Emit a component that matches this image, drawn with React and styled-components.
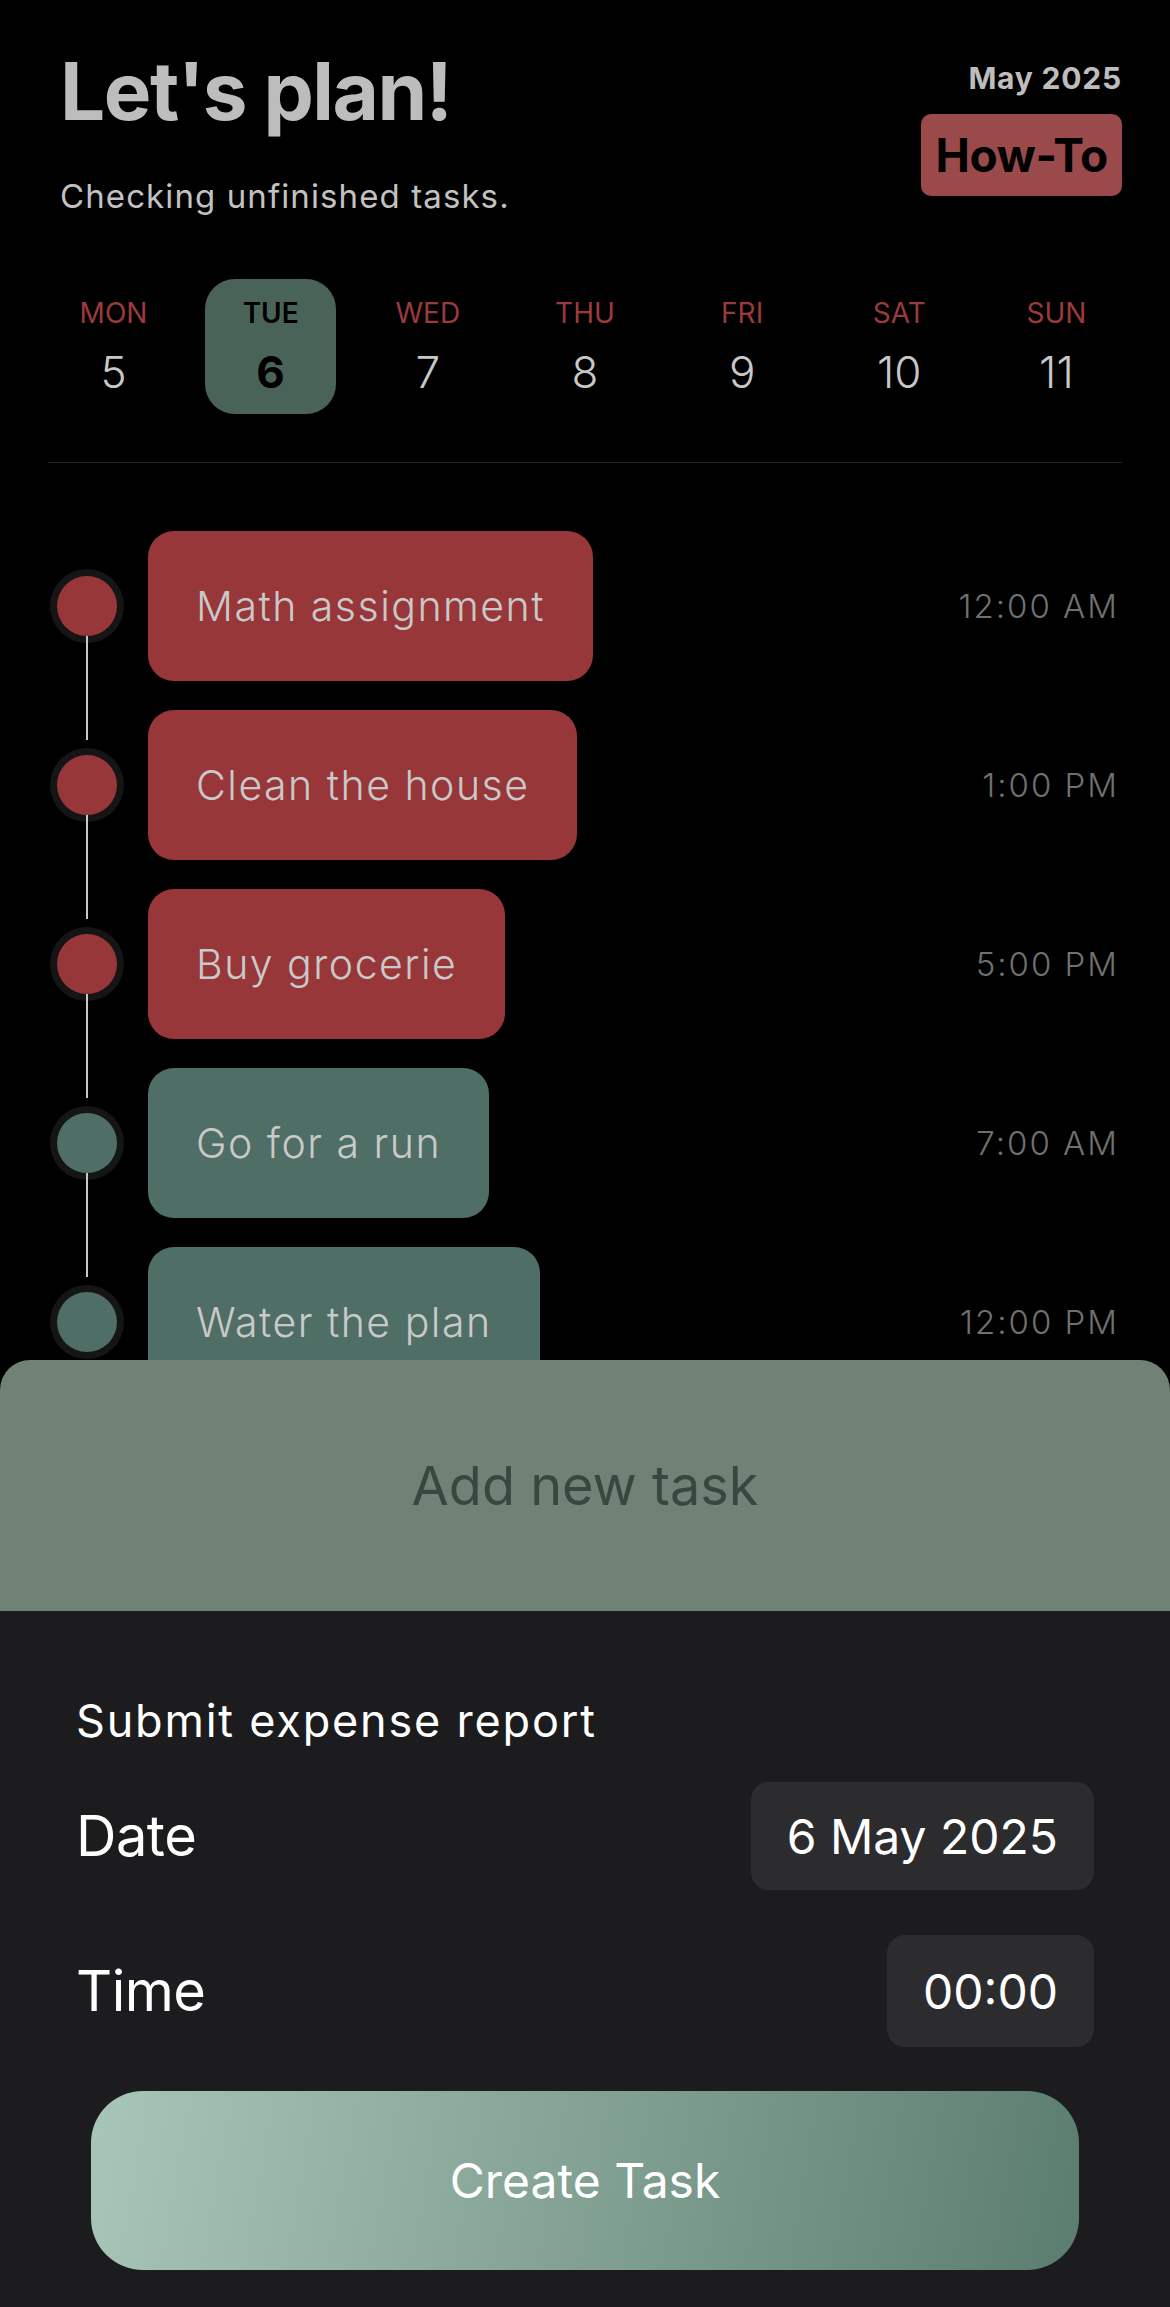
import styled, { createGlobalStyle } from 'styled-components';

const GlobalStyle = createGlobalStyle`
  html, body {
    margin: 0;
    padding: 0;
    background: #000;
  }
  body {
    font-family: Inter, "Noto Sans", "Liberation Sans", sans-serif;
  }
  * {
    box-sizing: border-box;
  }
`;

const Screen = styled.div`
  width: 1170px;
  height: 2307px;
  display: flex;
  flex-direction: column;
  background: #000;
  overflow: hidden;
`;

const Header = styled.header`
  display: flex;
  justify-content: space-between;
  padding: 51px 48px 0 60px;
`;

const TitleBox = styled.div`
  display: flex;
  flex-direction: column;
`;

const Title = styled.h1`
  margin: 0;
  font-size: 80px;
  line-height: 80px;
  font-weight: 700;
  letter-spacing: -1.5px;
  color: #bdbdbd;
`;

const Subtitle = styled.p`
  margin: 45px 0 0;
  font-size: 33px;
  line-height: 40px;
  font-weight: 400;
  color: #c2c2c2;
  letter-spacing: 1.1px;
`;

const Side = styled.div`
  display: flex;
  flex-direction: column;
  align-items: flex-end;
`;

const Month = styled.div`
  margin-top: 10px;
  font-size: 30px;
  line-height: 34px;
  font-weight: 700;
  color: #bdbdbd;
  letter-spacing: 0.8px;
`;

const HowTo = styled.button`
  margin-top: 19px;
  height: 82px;
  padding: 0 14px;
  border: none;
  border-radius: 10px;
  background: #9b4a4c;
  color: #000;
  font-family: inherit;
  font-size: 46px;
  font-weight: 700;
  letter-spacing: -0.3px;
`;

const Week = styled.div`
  display: flex;
  justify-content: space-between;
  margin: 63px 48px 0;
`;

const Day = styled.div`
  width: 131px;
  height: 135px;
  border-radius: 30px;
  display: flex;
  flex-direction: column;
  align-items: center;
  padding-top: 17px;
  background: ${(p) => (p.$active ? '#4a6358' : 'transparent')};
`;

const DayName = styled.span`
  font-size: 28px;
  line-height: 34px;
  font-weight: ${(p) => (p.$active ? 600 : 400)};
  color: ${(p) => (p.$active ? '#000' : '#9b3a3d')};
`;

const DayNum = styled.span`
  margin-top: 20px;
  font-size: 44px;
  line-height: 44px;
  font-weight: ${(p) => (p.$active ? 700 : 300)};
  color: ${(p) => (p.$active ? '#000' : '#c8c8c8')};
`;

const Divider = styled.hr`
  margin: 48px 48px 0;
  border: none;
  height: 1px;
  background: #242424;
`;

const Timeline = styled.div`
  flex: 1;
  overflow: hidden;
  display: flex;
  flex-direction: column;
  gap: 29px;
  padding: 68px 51px 0 48px;
`;

const Row = styled.div`
  display: flex;
  align-items: center;
  flex-shrink: 0;
`;

const Rail = styled.div`
  width: 78px;
  height: 150px;
  display: flex;
  flex-direction: column;
  align-items: center;
  padding-top: 45px;
`;

const Dot = styled.div`
  width: 60px;
  height: 60px;
  flex-shrink: 0;
  border-radius: 50%;
  background: ${(p) => p.$color};
  box-shadow: 0 0 0 7px #151515;
`;

const Line = styled.div`
  width: 2px;
  height: 104px;
  flex-shrink: 0;
  background: #c8c8c8;
`;

const Card = styled.div`
  margin-left: 22px;
  height: 150px;
  padding: 0 48px;
  border-radius: 26px;
  display: flex;
  align-items: center;
  background: ${(p) => p.$color};
  color: #c9c9c9;
  font-size: 41px;
  font-weight: 300;
  letter-spacing: 1.5px;
`;

const Time = styled.span`
  margin-left: auto;
  font-size: 33px;
  font-weight: 300;
  color: #707070;
  letter-spacing: 2px;
`;

const Sheet = styled.section`
  flex-shrink: 0;
  display: flex;
  flex-direction: column;
`;

const SheetHead = styled.div`
  height: 251px;
  border-radius: 30px 30px 0 0;
  background: #708276;
  display: flex;
  align-items: center;
  justify-content: center;
  font-size: 54px;
  font-weight: 400;
  color: #374840;
  letter-spacing: 0;
`;

const SheetBody = styled.div`
  height: 696px;
  background: #1c1c1e;
  padding: 83px 76px 0;
  display: flex;
  flex-direction: column;
`;

const TaskName = styled.div`
  font-size: 45px;
  line-height: 53px;
  color: #fff;
  letter-spacing: 1.8px;
`;

const Field = styled.div`
  display: flex;
  align-items: center;
  justify-content: space-between;
  margin-top: ${(p) => p.$gap}px;
`;

const Label = styled.span`
  font-size: 56px;
  color: #fff;
  letter-spacing: -0.5px;
`;

const Pill = styled.div`
  height: ${(p) => p.$h}px;
  padding: 0 36px;
  border-radius: 18px;
  background: #2c2c2f;
  display: flex;
  align-items: center;
  font-size: 48px;
  color: #fff;
  letter-spacing: 0;
`;

const CreateButton = styled.button`
  margin: 44px 15px 0;
  height: 179px;
  border: none;
  border-radius: 52px;
  background: linear-gradient(100deg, #a7c6b7 0%, #86a596 45%, #5b7d70 100%);
  color: #fff;
  font-family: inherit;
  font-size: 48px;
  font-weight: 400;
  letter-spacing: 0;
`;

const RED = '#983739';
const GREEN = '#4e6e66';

const days = [
  { name: 'MON', num: 5 },
  { name: 'TUE', num: 6, active: true },
  { name: 'WED', num: 7 },
  { name: 'THU', num: 8 },
  { name: 'FRI', num: 9 },
  { name: 'SAT', num: 10 },
  { name: 'SUN', num: 11 },
];

const tasks = [
  { title: 'Math assignment', time: '12:00 AM', color: RED },
  { title: 'Clean the house', time: '1:00 PM', color: RED },
  { title: 'Buy grocerie', time: '5:00 PM', color: RED },
  { title: 'Go for a run', time: '7:00 AM', color: GREEN },
  { title: 'Water the plan', time: '12:00 PM', color: GREEN },
];

export default function App() {
  return (
    <Screen>
      <GlobalStyle />
      <Header>
        <TitleBox>
          <Title>Let's plan!</Title>
          <Subtitle>Checking unfinished tasks.</Subtitle>
        </TitleBox>
        <Side>
          <Month>May 2025</Month>
          <HowTo>How-To</HowTo>
        </Side>
      </Header>

      <Week>
        {days.map((d) => (
          <Day key={d.name} $active={d.active}>
            <DayName $active={d.active}>{d.name}</DayName>
            <DayNum $active={d.active}>{d.num}</DayNum>
          </Day>
        ))}
      </Week>
      <Divider />

      <Timeline>
        {tasks.map((t, i) => (
          <Row key={t.title}>
            <Rail>
              <Dot $color={t.color} />
              {i < tasks.length - 1 && <Line />}
            </Rail>
            <Card $color={t.color}>{t.title}</Card>
            <Time>{t.time}</Time>
          </Row>
        ))}
      </Timeline>

      <Sheet>
        <SheetHead>Add new task</SheetHead>
        <SheetBody>
          <TaskName>Submit expense report</TaskName>
          <Field $gap={35}>
            <Label>Date</Label>
            <Pill $h={108}>6 May 2025</Pill>
          </Field>
          <Field $gap={45}>
            <Label>Time</Label>
            <Pill $h={112}>00:00</Pill>
          </Field>
          <CreateButton>Create Task</CreateButton>
        </SheetBody>
      </Sheet>
    </Screen>
  );
}
